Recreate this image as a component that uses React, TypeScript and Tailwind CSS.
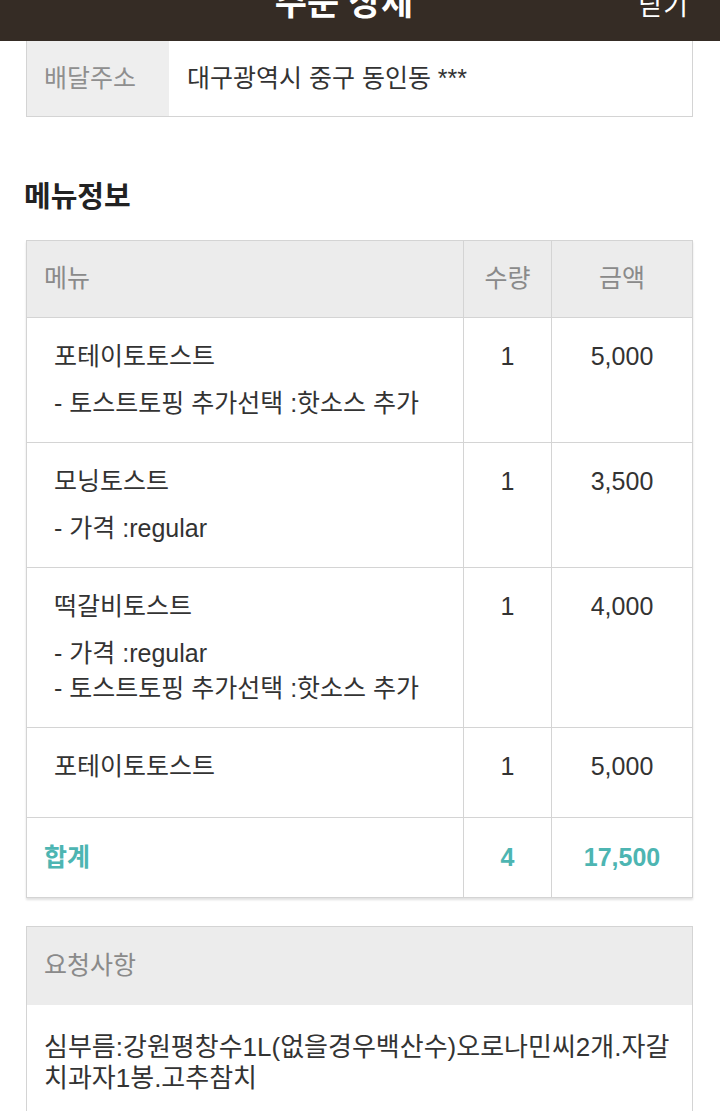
const items = [
  { name: "포테이토토스트", options: ["- 토스트토핑 추가선택 :핫소스 추가"], qty: 1, price: "5,000" },
  { name: "모닝토스트", options: ["- 가격 :regular"], qty: 1, price: "3,500" },
  { name: "떡갈비토스트", options: ["- 가격 :regular", "- 토스트토핑 추가선택 :핫소스 추가"], qty: 1, price: "4,000" },
  { name: "포테이토토스트", options: [], qty: 1, price: "5,000" },
];

const App = () => {
  return (
    <div
      className="w-[720px] min-h-[1111px] bg-white text-[#333] overflow-hidden"
      style={{ fontFamily: '"Liberation Sans", "Noto Sans CJK KR", sans-serif' }}
    >
      {/* Top bar - title scrolled partly out of view */}
      <header className="h-[41px] bg-[#352c25] flex items-start overflow-hidden text-white">
        <div className="flex-1" />
        <h1 className="text-[35px] font-bold leading-none -mt-[15px]">주문 상세</h1>
        <div className="flex-1 flex justify-end pr-[32px]">
          <span className="text-[27px] leading-none -mt-[7px]">닫기</span>
        </div>
      </header>

      <main className="pl-[26px] pr-[27px]">
        {/* Address */}
        <div className="flex border border-t-0 border-[#d4d4d4] h-[76px] text-[25px]">
          <div className="w-[142px] bg-[#eeeeee] flex items-center pl-[17px] text-[#8f8f8f]">배달주소</div>
          <div className="flex items-center pl-[18px] text-[#333]">대구광역시 중구 동인동 ***</div>
        </div>

        {/* Menu info */}
        <h2 className="mt-[66px] text-[29px] font-bold leading-none text-[#222] -ml-[2px]">메뉴정보</h2>

        <div className="mt-[28px] border border-[#d4d4d4] shadow-[0_2px_2px_rgba(0,0,0,0.12)] text-[25px]">
          <div className="grid grid-cols-[436px_88px_1fr] bg-[#ececec] h-[77px] text-[#8a8a8a] border-b border-[#d4d4d4]">
            <div className="flex items-center pl-[17px]">메뉴</div>
            <div className="flex items-center justify-center border-l border-[#d4d4d4]">수량</div>
            <div className="flex items-center justify-center border-l border-[#d4d4d4]">금액</div>
          </div>

          {items.map((item, i) => (
            <div key={i} className="grid grid-cols-[436px_88px_1fr] border-b border-[#d4d4d4] leading-[33px]">
              <div className="pl-[27px] pt-[22px] pb-[21px]">
                <div className="mb-[13px]">{item.name}</div>
                {item.options.map((opt, j) => (
                  <div key={j} className="leading-[35px]">{opt}</div>
                ))}
              </div>
              <div className="text-center pt-[22px] border-l border-[#d4d4d4]">{item.qty}</div>
              <div className="text-center pt-[22px] border-l border-[#d4d4d4]">{item.price}</div>
            </div>
          ))}

          <div className="grid grid-cols-[436px_88px_1fr] h-[79px] text-[#4db5b2] font-semibold">
            <div className="flex items-center pl-[17px]">합계</div>
            <div className="flex items-center justify-center border-l border-[#d4d4d4]">4</div>
            <div className="flex items-center justify-center border-l border-[#d4d4d4]">17,500</div>
          </div>
        </div>

        {/* Request */}
        <div className="mt-[28px] border border-[#d4d4d4] text-[25px]">
          <div className="bg-[#ececec] h-[78px] flex items-center pl-[17px] text-[#8a8a8a]">요청사항</div>
          <div className="pl-[17px] pr-[20px] pt-[27px] pb-[30px] leading-[31px] text-[26px]">
            심부름:강원평창수1L(없을경우백산수)오로나민씨2개.자갈
            <br />
            치과자1봉.고추참치
          </div>
        </div>
      </main>
    </div>
  );
};

export default App;
